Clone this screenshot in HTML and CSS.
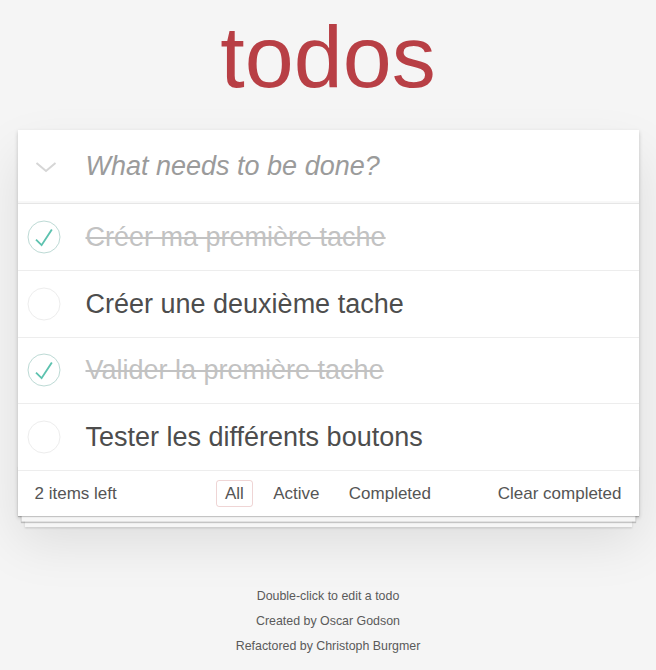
FILE: index.html
```html
<!DOCTYPE html>
<html lang="fr">
<head>
<meta charset="utf-8">
<title>todos</title>
<link rel="stylesheet" href="styles.css">
</head>
<body>
<section class="todoapp">
  <h1 class="title">todos</h1>
  <div class="card">
    <div class="new-row">
      <span class="toggle-all">
        <svg width="22" height="12" viewBox="0 0 22 12"><polyline points="1.5,2 11,10 20.5,2" fill="none" stroke="#d6d6d6" stroke-width="2"/></svg>
      </span>
      <input class="new-todo" type="text" placeholder="What needs to be done?">
    </div>
    <ul class="todo-list">
      <li class="todo completed">
        <svg class="check" width="34" height="34" viewBox="0 0 34 34"><circle cx="17" cy="17" r="16" fill="none" stroke="#bddad5" stroke-width="1"/><path d="M24.04 9L14.44 23.72 9.64 18.92 8.36 20.2 14.76 26.6 25.64 9.96z" fill="#5dc2af"/></svg>
        <span class="label">Créer ma première tache</span>
      </li>
      <li class="todo">
        <svg class="check" width="34" height="34" viewBox="0 0 34 34"><circle cx="17" cy="17" r="16" fill="none" stroke="#ededed" stroke-width="1"/></svg>
        <span class="label">Créer une deuxième tache</span>
      </li>
      <li class="todo completed">
        <svg class="check" width="34" height="34" viewBox="0 0 34 34"><circle cx="17" cy="17" r="16" fill="none" stroke="#bddad5" stroke-width="1"/><path d="M24.04 9L14.44 23.72 9.64 18.92 8.36 20.2 14.76 26.6 25.64 9.96z" fill="#5dc2af"/></svg>
        <span class="label">Valider la première tache</span>
      </li>
      <li class="todo">
        <svg class="check" width="34" height="34" viewBox="0 0 34 34"><circle cx="17" cy="17" r="16" fill="none" stroke="#ededed" stroke-width="1"/></svg>
        <span class="label">Tester les différents boutons</span>
      </li>
    </ul>
    <footer class="footer">
      <span class="count">2 items left</span>
      <ul class="filters">
        <li><a class="selected">All</a></li>
        <li><a>Active</a></li>
        <li><a>Completed</a></li>
      </ul>
      <span class="clear">Clear completed</span>
    </footer>
  </div>
</section>
<footer class="info">
  <p>Double-click to edit a todo</p>
  <p>Created by Oscar Godson</p>
  <p>Refactored by Christoph Burgmer</p>
</footer>
</body>
</html>
```

FILE: styles.css
```css
html, body {
  margin: 0;
  padding: 0;
}

body {
  background: #f5f5f5;
  font-family: "Liberation Sans", Arial, Helvetica, sans-serif;
  color: #4d4d4d;
  -webkit-font-smoothing: antialiased;
}

.todoapp {
  width: 621px;
  margin: 0 auto;
  padding-top: 12px;
}

.title {
  margin: 0 0 28px;
  height: 90px;
  font-size: 88px;
  line-height: 90px;
  font-weight: 400;
  text-align: center;
  color: #b83f45;
}

.card {
  position: relative;
  background: #fff;
  box-shadow: 0 2px 4px rgba(0, 0, 0, 0.2), 0 25px 50px 0 rgba(0, 0, 0, 0.1);
}

.new-row {
  display: flex;
  align-items: center;
  height: 73px;
  box-shadow: inset 0 -2px 1px rgba(0, 0, 0, 0.03);
}

.toggle-all {
  display: flex;
  align-items: center;
  width: 51px;
  padding-left: 17px;
}

.new-todo {
  flex: 1;
  min-width: 0;
  border: 0;
  outline: none;
  background: transparent;
  padding: 0 17px 0 0;
  font-family: inherit;
  font-size: 27px;
  color: #4d4d4d;
}

.new-todo::placeholder {
  font-style: italic;
  color: #9b9b9b;
}

.todo-list {
  list-style: none;
  margin: 0;
  padding: 0;
  border-top: 1px solid #e6e6e6;
}

.todo {
  display: flex;
  align-items: center;
  height: 65.8px;
  border-bottom: 1px solid #ededed;
}

.check {
  flex: none;
  margin: 0 25px 0 9px;
}

.label {
  font-size: 27px;
  line-height: 32px;
  color: #4d4d4d;
  white-space: nowrap;
}

.completed .label {
  color: #c2c2c2;
  text-decoration: line-through;
}

.footer {
  position: relative;
  display: grid;
  grid-template-columns: 1fr auto 1fr;
  align-items: center;
  height: 45px;
  padding: 0 17px;
  font-size: 17px;
  color: #555;
}

.footer::before {
  content: "";
  position: absolute;
  left: 0;
  right: 0;
  bottom: 0;
  height: 50px;
  overflow: hidden;
  box-shadow: 0 1px 1px rgba(0, 0, 0, 0.2),
    0 9px 0 -3.4px #f6f6f6,
    0 10px 1px -3.4px rgba(0, 0, 0, 0.2),
    0 18px 0 -6.8px #f6f6f6,
    0 19px 2px -6.8px rgba(0, 0, 0, 0.2);
  pointer-events: none;
}

.count {
  justify-self: start;
}

.clear {
  justify-self: end;
}

.filters {
  list-style: none;
  margin: 0;
  padding: 0;
  white-space: nowrap;
}

.filters li {
  display: inline;
}

.filters a {
  margin: 3.4px;
  padding: 3px 7.9px;
  border: 1px solid transparent;
  border-radius: 3px;
  color: inherit;
}

.filters a.selected {
  border-color: rgba(175, 47, 47, 0.2);
}

.info {
  margin-top: 68px;
  text-align: center;
  font-size: 12.4px;
  color: #5a5a5a;
}

.info p {
  margin: 0;
  line-height: 25px;
}
```
